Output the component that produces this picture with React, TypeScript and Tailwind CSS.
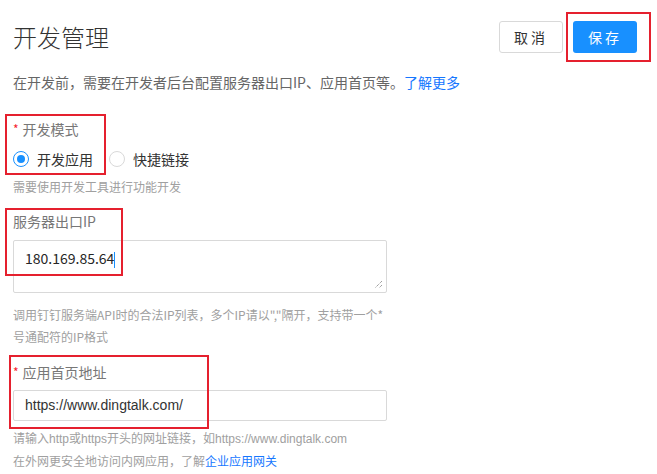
import React from "react";

const font = { fontFamily: '"Noto Sans CJK SC", "Liberation Sans", sans-serif' };
const latin = { fontFamily: '"Liberation Sans", "Noto Sans CJK SC", sans-serif' };

export default function App() {
  return (
    <div
      className="relative w-[657px] h-[474px] overflow-hidden bg-white pl-[13px] pr-[20px]"
      style={font}
    >
      {/* Header */}
      <div className="mt-[21px] flex h-[32px] items-center justify-between">
        <h1 className="text-[24px] font-light leading-[32px] text-[#333]">开发管理</h1>
        <div className="flex items-center gap-[10px]">
          <button className="h-[32px] w-[64px] rounded-[3px] border border-[#d9d9d9] bg-white text-[14px] tracking-[3px] text-[#333]">
            取消
          </button>
          <button className="h-[32px] w-[64px] rounded-[3px] bg-[#1890ff] text-[14px] tracking-[3px] text-white">
            保存
          </button>
        </div>
      </div>

      {/* Description */}
      <p className="mt-[18px] text-[14px] leading-[22px] text-[#666]">
        在开发前，需要在开发者后台配置服务器出口IP、应用首页等。
        <span className="text-[#1677ff]">了解更多</span>
      </p>

      {/* Mode */}
      <div className="mt-[25px] flex items-center text-[14px] leading-[22px] text-[#777]">
        <span className="mr-[4px] text-[12px] text-[#f5222d]">*</span>
        开发模式
      </div>
      <div className="mt-[8px] flex h-[22px] items-center text-[14px] text-[#333]">
        <span className="flex h-[16px] w-[16px] items-center justify-center rounded-full border border-[#1890ff]">
          <span className="h-[8px] w-[8px] rounded-full bg-[#1890ff]" />
        </span>
        <span className="ml-[8px]">开发应用</span>
        <span className="ml-[16px] h-[16px] w-[16px] rounded-full border border-[#d9d9d9]" />
        <span className="ml-[8px]">快捷链接</span>
      </div>
      <p className="mt-[6px] text-[12px] leading-[22px] text-[#a0a0a0]">需要使用开发工具进行功能开发</p>

      {/* IP */}
      <div className="mt-[12px] text-[14px] leading-[22px] text-[#777]">服务器出口IP</div>
      <div className="relative mt-[8px] h-[53px] w-[374px] rounded-[2px] border border-[#d9d9d9] px-[11px] pt-[6px] text-[14px] leading-[22px] text-[#262626]">
        180.169.85.64<span className="inline-block h-[16px] w-px bg-[#1890ff] align-middle" />
        <svg className="absolute bottom-[3px] right-[3px]" width="9" height="9" viewBox="0 0 9 9">
          <path d="M8 1 L1 8 M8 5 L5 8" stroke="#777" strokeWidth="1" strokeDasharray="1 1" />
        </svg>
      </div>
      <p className="mt-[11px] w-[380px] text-[12px] leading-[22px] text-[#a0a0a0]">
        调用钉钉服务端API时的合法IP列表，多个IP请以","隔开，支持带一个*号通配符的IP格式
      </p>

      {/* URL */}
      <div className="mt-[13px] flex items-center text-[14px] leading-[22px] text-[#777]">
        <span className="mr-[4px] text-[12px] text-[#f5222d]">*</span>
        应用首页地址
      </div>
      <div
        className="mt-[7px] flex h-[31px] w-[374px] items-center rounded-[2px] border border-[#d9d9d9] px-[11px] text-[14px] text-[#333]"
        style={latin}
      >
        https://www.dingtalk.com/
      </div>
      <p className="mt-[8px] text-[12px] leading-[21px] text-[#a0a0a0]" style={latin}>
        请输入http或https开头的网址链接，如https://www.dingtalk.com
      </p>
      <p className="text-[12px] leading-[21px] text-[#a0a0a0]">
        在外网更安全地访问内网应用，了解<span className="text-[#1677ff]">企业应用网关</span>
      </p>

      {/* annotation boxes */}
      <div className="pointer-events-none absolute left-[566px] top-[12px] h-[50px] w-[85px] border-2 border-[#e5202e]" />
      <div className="pointer-events-none absolute left-[5px] top-[114px] h-[61px] w-[101px] border-2 border-[#e5202e]" />
      <div className="pointer-events-none absolute left-[5px] top-[208px] h-[68px] w-[118px] border-2 border-[#e5202e]" />
      <div className="pointer-events-none absolute left-[9px] top-[355px] h-[74px] w-[200px] border-2 border-[#e5202e]" />
    </div>
  );
}
